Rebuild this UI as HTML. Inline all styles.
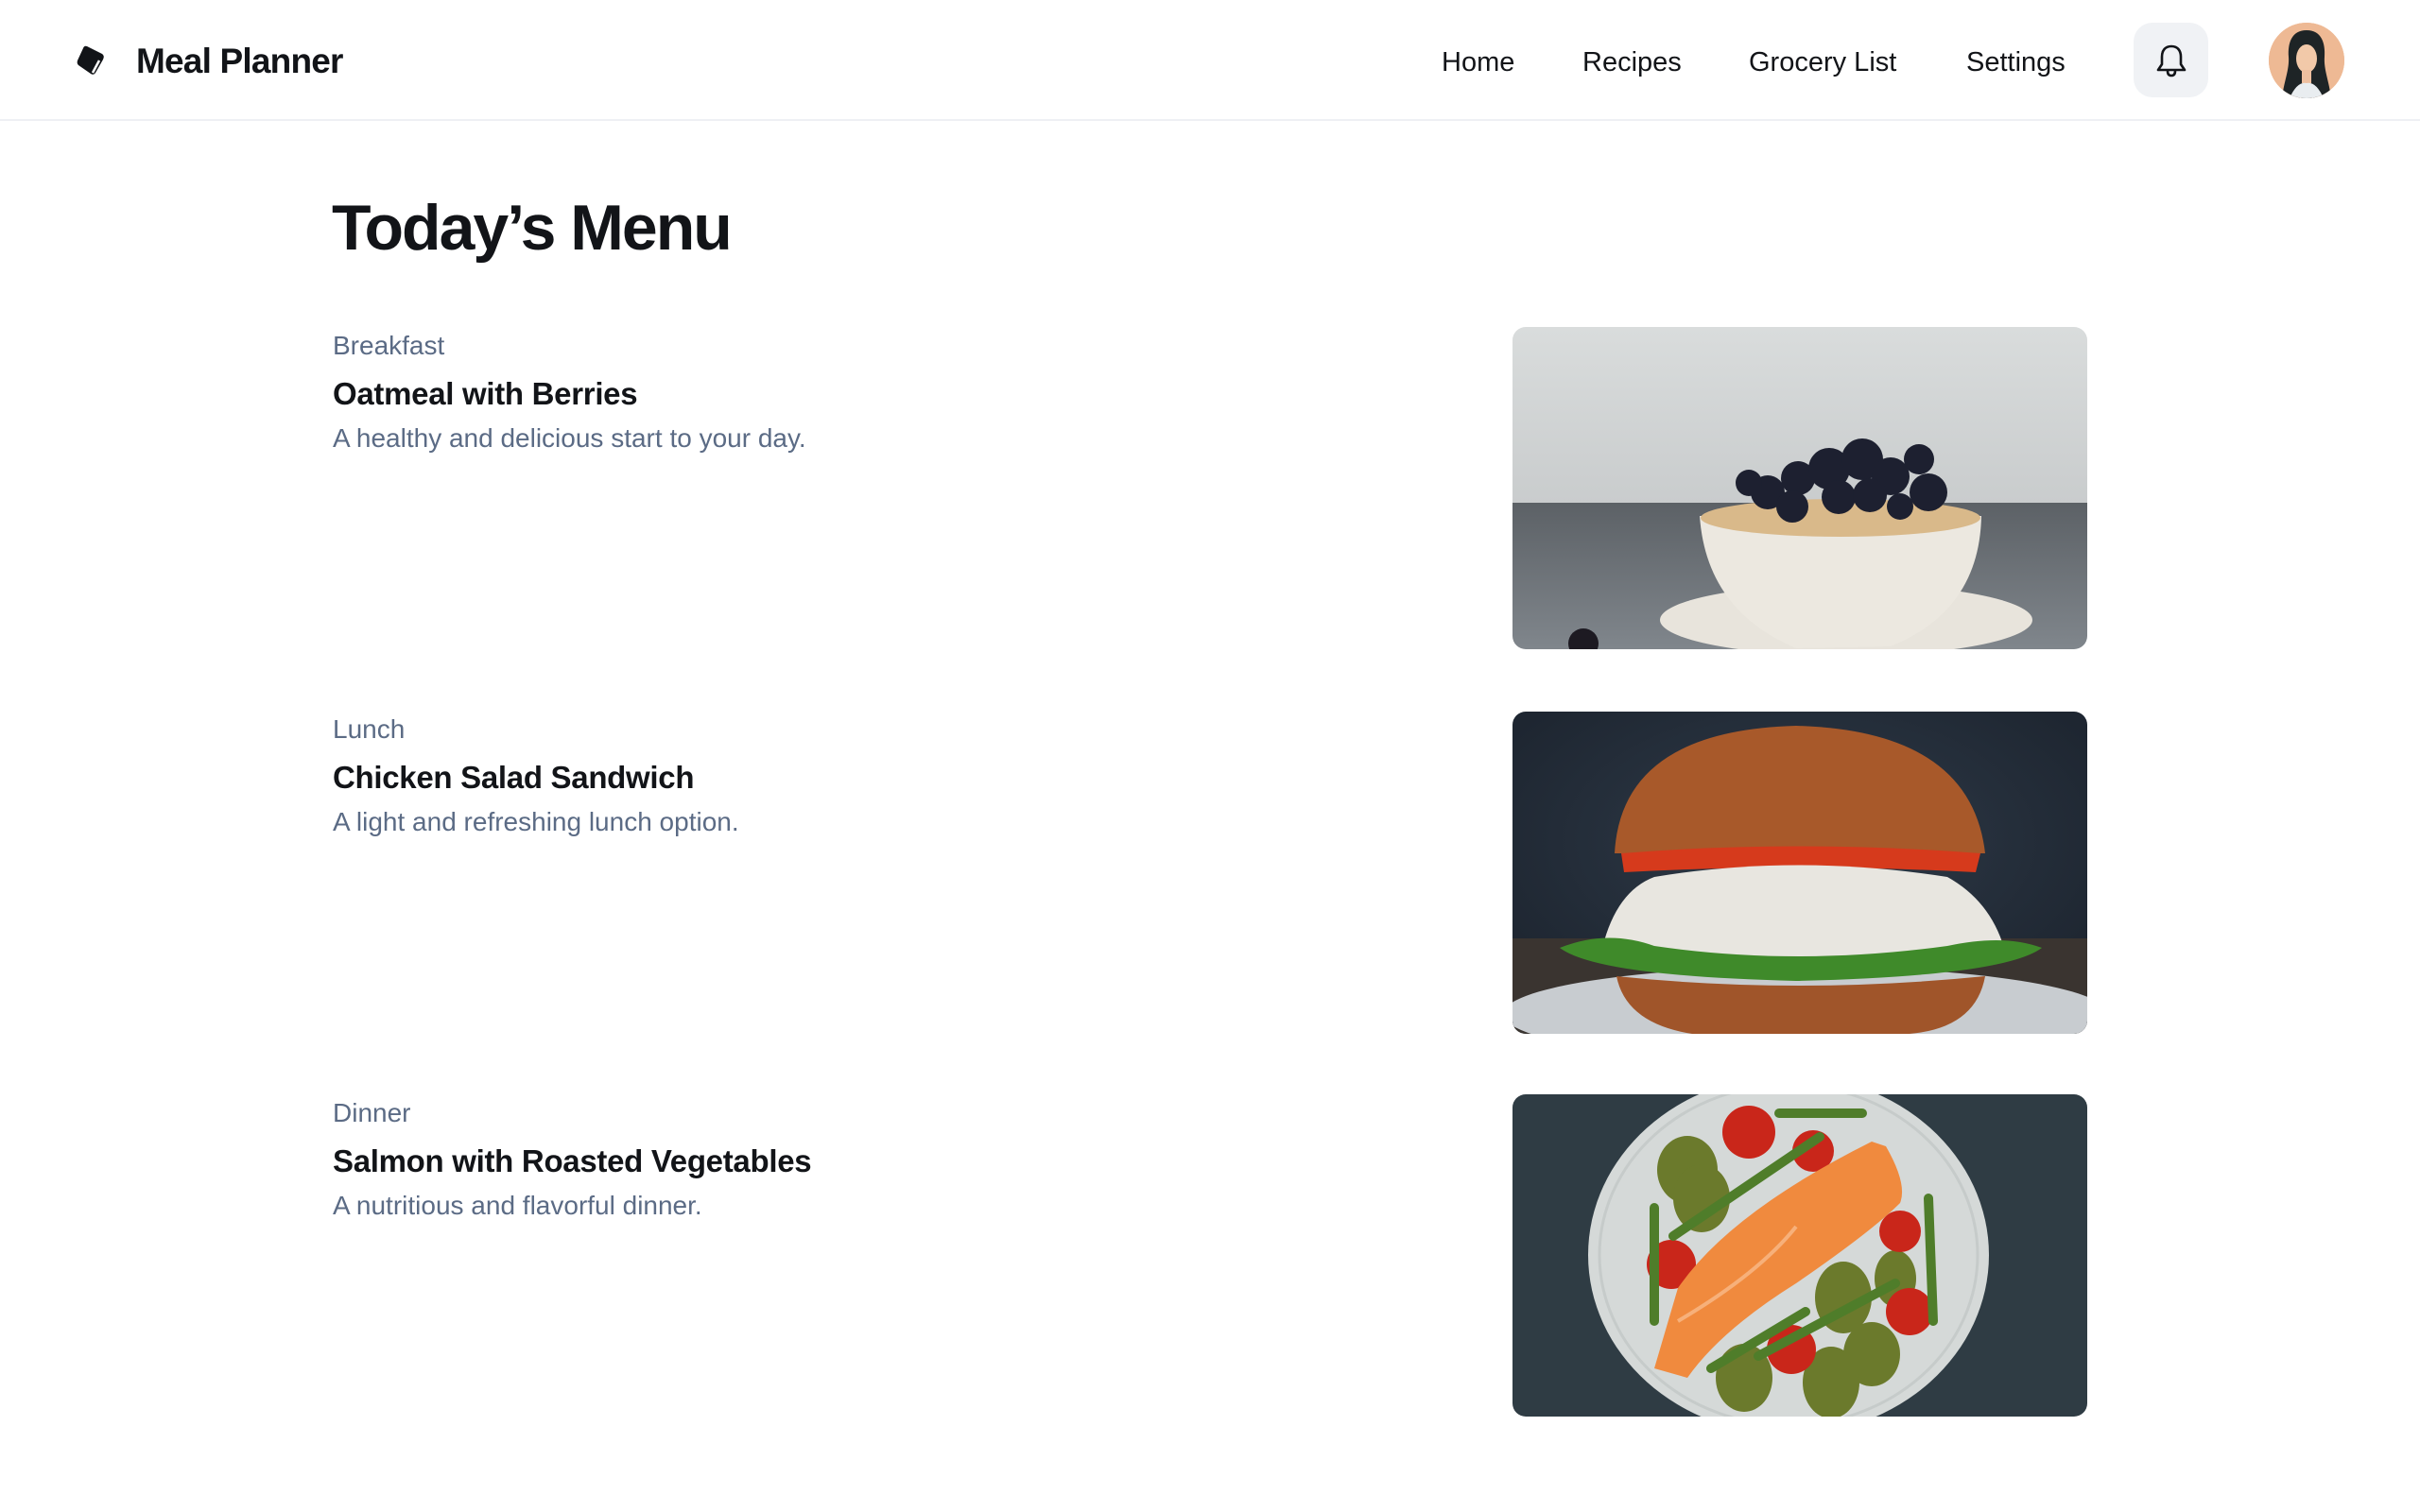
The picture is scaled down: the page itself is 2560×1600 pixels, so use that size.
<!DOCTYPE html>
<html><head><meta charset="utf-8"><style>
*{margin:0;padding:0;box-sizing:border-box}
body{width:2560px;height:1600px;background:#fff;font-family:"Liberation Sans",sans-serif;color:#121418;position:relative;overflow:hidden}
.hdr{position:absolute;left:0;top:0;width:2560px;height:128px;border-bottom:2px solid #eef0f4}
.brand{position:absolute;left:144px;top:44px;font-size:37px;font-weight:700;letter-spacing:-0.8px}
.nav{position:absolute;top:50px;font-size:29px}
.bell{position:absolute;left:2257px;top:24px;width:79px;height:79px;border-radius:20px;background:#f0f2f5}
.av{position:absolute;left:2400px;top:24px;width:80px;height:80px;border-radius:50%;overflow:hidden;background:#eeb994}
h1{position:absolute;left:351px;top:202px;font-size:68px;font-weight:700;letter-spacing:-2px}
.lab{position:absolute;left:352px;font-size:28px;color:#5b6b85}
.tt{position:absolute;left:352px;font-size:33px;font-weight:700;letter-spacing:-0.3px}
.ds{position:absolute;left:352px;font-size:28px;color:#5b6b85}
.img{position:absolute;left:1600px;width:608px;height:341px;border-radius:14px;overflow:hidden}
</style></head><body>
<div class="hdr">
<svg style="position:absolute;left:80px;top:47px" width="32" height="34" viewBox="0 0 32 34"><path d="M12 2 L28 10 Q31 12 29 16 L21 30 Q19 33 16 31 L3 22 Q1 20 2 17 L8 4 Q9 1 12 2Z" fill="#121418"/><path d="M18 30 L25 17" stroke="#fff" stroke-width="2.5" fill="none"/></svg>
<div class="brand">Meal Planner</div>
<div class="nav" style="left:1525px">Home</div>
<div class="nav" style="left:1674px">Recipes</div>
<div class="nav" style="left:1850px">Grocery List</div>
<div class="nav" style="left:2080px">Settings</div>
<div class="bell"><svg style="position:absolute;left:23px;top:22px" width="34" height="36" viewBox="0 0 34 36"><path d="M17 3 C10 3 7 8 7 14 L7 22 L3 28 L31 28 L27 22 L27 14 C27 8 24 3 17 3Z M13 29 Q13 34 17 34 Q21 34 21 29" fill="none" stroke="#121418" stroke-width="2.6" stroke-linejoin="round"/></svg></div>
<div class="av"><svg width="80" height="80" viewBox="0 0 80 80"><rect width="80" height="80" fill="#eeb994"/><path d="M40 8 C24 8 20 22 21 36 C22 50 16 62 14 80 L66 80 C64 62 58 50 59 36 C60 22 56 8 40 8Z" fill="#1e2426"/><ellipse cx="40" cy="38" rx="11" ry="15" fill="#f2c9a9"/><path d="M29 30 Q36 18 50 26 Q46 14 40 14 Q30 16 29 30Z" fill="#1e2426"/><rect x="35" y="50" width="10" height="14" fill="#eebf9f"/><path d="M22 80 Q30 62 40 64 Q50 62 58 80Z" fill="#e9edf0"/></svg></div>
</div>
<h1>Today’s Menu</h1>

<div class="lab" style="top:350px">Breakfast</div>
<div class="tt" style="top:398px">Oatmeal with Berries</div>
<div class="ds" style="top:448px">A healthy and delicious start to your day.</div>
<div class="img" style="top:346px"><svg width="608" height="341" viewBox="0 0 608 341"><defs><linearGradient id="w" x1="0" y1="0" x2="0" y2="1"><stop offset="0" stop-color="#d9dcdc"/><stop offset="1" stop-color="#c9cccd"/></linearGradient><linearGradient id="t" x1="0" y1="0" x2="0" y2="1"><stop offset="0" stop-color="#5c6166"/><stop offset="1" stop-color="#80868c"/></linearGradient></defs><rect width="608" height="188" fill="url(#w)"/><rect y="186" width="608" height="155" fill="url(#t)"/><ellipse cx="353" cy="310" rx="197" ry="38" fill="#e8e4dc"/><path d="M198 200 L496 200 Q494 300 400 338 L300 340 Q205 300 198 200Z" fill="#ece8e0"/><ellipse cx="347" cy="202" rx="148" ry="20" fill="#d9b98a"/><g fill="#1d2030"><circle cx="270" cy="175" r="18"/><circle cx="302" cy="160" r="18"/><circle cx="335" cy="150" r="22"/><circle cx="370" cy="140" r="22"/><circle cx="400" cy="158" r="20"/><circle cx="430" cy="140" r="16"/><circle cx="440" cy="175" r="20"/><circle cx="345" cy="180" r="18"/><circle cx="378" cy="178" r="18"/><circle cx="250" cy="165" r="14"/><circle cx="296" cy="190" r="17"/><circle cx="410" cy="190" r="14"/></g><circle cx="75" cy="335" r="16" fill="#1d1a22"/></svg></div>

<div class="lab" style="top:756px">Lunch</div>
<div class="tt" style="top:804px">Chicken Salad Sandwich</div>
<div class="ds" style="top:854px">A light and refreshing lunch option.</div>
<div class="img" style="top:753px"><svg width="608" height="341" viewBox="0 0 608 341"><defs><radialGradient id="b" cx="0.5" cy="0.4" r="0.6"><stop offset="0" stop-color="#2f3b49"/><stop offset="1" stop-color="#1e2631"/></radialGradient></defs><rect width="608" height="341" fill="url(#b)"/><rect y="240" width="608" height="101" fill="#3a3430"/><ellipse cx="310" cy="320" rx="320" ry="50" fill="#c8ccd0"/><path d="M108 150 Q115 20 300 15 Q485 20 500 150Z" fill="#a8592a"/><path d="M115 150 Q300 135 495 150 L490 170 Q300 160 118 170Z" fill="#d63a1c"/><path d="M95 250 Q110 190 150 175 Q300 150 460 175 Q505 200 520 250 Q300 280 95 250Z" fill="#e8e6e0"/><path d="M50 250 Q100 230 150 248 Q300 270 460 248 Q520 235 560 250 Q520 280 300 285 Q90 280 50 250Z" fill="#3f8a2a"/><path d="M110 280 Q300 300 500 280 Q490 335 420 341 L190 341 Q120 330 110 280Z" fill="#a0552a"/></svg></div>

<div class="lab" style="top:1162px">Dinner</div>
<div class="tt" style="top:1210px">Salmon with Roasted Vegetables</div>
<div class="ds" style="top:1260px">A nutritious and flavorful dinner.</div>
<div class="img" style="top:1158px"><svg width="608" height="341" viewBox="0 0 608 341"><rect width="608" height="341" fill="#2f3c44"/><ellipse cx="292" cy="170" rx="212" ry="190" fill="#d5d9d8"/><ellipse cx="292" cy="170" rx="200" ry="180" fill="none" stroke="#c6cbca" stroke-width="3"/><g fill="#6b7a2c"><ellipse cx="185" cy="80" rx="32" ry="36"/><ellipse cx="200" cy="110" rx="30" ry="36"/><ellipse cx="350" cy="215" rx="30" ry="38"/><ellipse cx="380" cy="275" rx="30" ry="34"/><ellipse cx="245" cy="300" rx="30" ry="36"/><ellipse cx="337" cy="305" rx="30" ry="38"/><ellipse cx="405" cy="195" rx="22" ry="30"/></g><g fill="#c9261a"><circle cx="250" cy="40" r="28"/><circle cx="168" cy="180" r="26"/><circle cx="420" cy="230" r="25"/><circle cx="295" cy="270" r="26"/><circle cx="410" cy="145" r="22"/><circle cx="318" cy="60" r="22"/></g><g stroke="#4f7d2a" stroke-width="10" stroke-linecap="round" fill="none"><path d="M170 150 L325 45"/><path d="M282 20 L370 20"/><path d="M150 120 L150 240"/><path d="M440 110 L445 240"/><path d="M260 277 L405 200"/><path d="M210 290 L310 230"/></g><path d="M150 290 L175 205 Q230 125 380 50 L395 55 Q418 95 410 115 Q380 145 300 200 Q220 250 185 300Z" fill="#f08a3e"/><path d="M175 240 Q260 190 300 140" stroke="#f7b07a" stroke-width="4" fill="none"/></svg></div>
</body></html>
